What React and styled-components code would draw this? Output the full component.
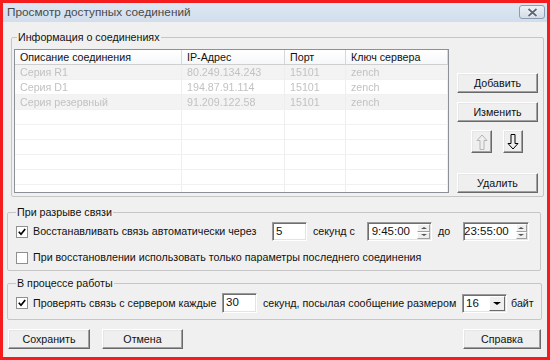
import React from "react";
import styled, { createGlobalStyle } from "styled-components";

const GlobalStyle = createGlobalStyle`
  html, body {
    margin: 0;
    padding: 0;
    background: #fff;
  }
  body {
    font-family: "Liberation Sans", Arial, sans-serif;
    font-size: 10.7px;
    color: #111;
  }
`;

const Window = styled.div`
  width: 550px;
  height: 360px;
  box-sizing: border-box;
  border: 3px solid #f41c1c;
  background: #f0f0f0;
  display: flex;
  flex-direction: column;
  overflow: hidden;
`;

const TitleBar = styled.div`
  height: 19px;
  display: flex;
  justify-content: space-between;
  padding: 0 2px 0 4px;
  background: linear-gradient(to bottom, #dde7f3, #d2deec);
`;

const Title = styled.div`
  font-size: 11.8px;
  line-height: 19px;
  color: #4a4a4a;
`;

const CloseBtn = styled.div`
  margin-top: 2px;
  width: 26px;
  height: 14px;
  box-sizing: border-box;
  border: 1px solid #8d9bb0;
  border-radius: 3px;
  background: linear-gradient(to bottom, #eef2f7, #d3dce8);
  display: flex;
  align-items: center;
  justify-content: center;
`;

const Group = styled.fieldset`
  margin: ${(p) => p.$m};
  padding: ${(p) => p.$p};
  border: 1px solid #c6c6c6;
  border-radius: 2px;
  min-width: 0;
`;

const Legend = styled.legend`
  padding: 0 1px;
  margin-left: ${(p) => p.$ml || 0}px;
  line-height: 13px;
`;

const InfoLayout = styled.div`
  display: flex;
`;

const Table = styled.div`
  width: 435px;
  height: 144px;
  box-sizing: border-box;
  border: 1px solid #8c9098;
  background: #fff;
  overflow: hidden;
`;

const cols = "167px 103px 61px 1fr";

const HeadRow = styled.div`
  display: grid;
  grid-template-columns: ${cols};
  height: 15px;
`;

const HeadCell = styled.div`
  padding-left: 5px;
  line-height: 14px;
  background: linear-gradient(to bottom, #fff, #f6f7f9);
  border-right: 1px solid #d8d8d8;
  border-bottom: 1px solid #cfcfcf;
  white-space: nowrap;
`;

const Row = styled.div`
  display: grid;
  grid-template-columns: ${cols};
  height: 15px;
  box-sizing: border-box;
  background: ${(p) => (p.$alt ? "#f3f3f3" : "#fff")};
  border-bottom: 1px solid #f1f1f1;
`;

const Cell = styled.div`
  padding-left: 5px;
  line-height: 14px;
  color: #c2c2c2;
  filter: blur(0.7px);
  border-right: 1px solid #eeeeee;
  white-space: nowrap;
`;

const SideButtons = styled.div`
  margin-left: 8px;
  padding-top: 24px;
  display: flex;
  flex-direction: column;
`;

const Btn = styled.button`
  width: ${(p) => p.$w || 81}px;
  height: ${(p) => p.$h || 20}px;
  margin: ${(p) => p.$m || 0};
  padding: 0;
  box-sizing: border-box;
  font-family: inherit;
  font-size: 10.7px;
  color: #111;
  background: #efefef;
  border: 1px solid;
  border-color: #fff #696969 #696969 #fff;
  box-shadow: inset -1px -1px #a0a0a0, inset 1px 1px #e6e6e6;
  display: flex;
  align-items: center;
  justify-content: center;
`;

const ArrowRow = styled.div`
  display: flex;
  gap: 11px;
  padding-left: 14px;
  margin: 8px 0 20px;
`;

const FormRow = styled.div`
  display: flex;
  align-items: center;
  height: ${(p) => p.$h}px;
  margin-top: ${(p) => p.$mt || 0}px;
  white-space: nowrap;
`;

const CheckBox = styled.span`
  width: 12px;
  height: 12px;
  box-sizing: border-box;
  border: 1px solid #8e8f8f;
  background: #fff;
  display: flex;
  align-items: center;
  justify-content: center;
  flex: none;
`;

const Text = styled.span`
  margin-left: ${(p) => p.$ml || 0}px;
  width: ${(p) => (p.$w ? `${p.$w}px` : "auto")};
  flex: none;
  line-height: 13px;
`;

const Sunken = styled.div`
  width: ${(p) => p.$w}px;
  height: ${(p) => p.$h || 19}px;
  box-sizing: border-box;
  border: 1px solid;
  border-color: #9a9a9a #fff #fff #9a9a9a;
  box-shadow: inset 1px 1px #6f6f6f, inset -1px -1px #e3e3e3;
  background: #fff;
  display: flex;
  align-items: stretch;
  flex: none;
`;

const FieldText = styled.div`
  flex: 1;
  padding: ${(p) => (p.$right ? "0 7px 0 0" : "0 0 0 3px")};
  text-align: ${(p) => (p.$right ? "right" : "left")};
  line-height: 16px;
  font-size: 11.5px;
`;

const SpinBox = styled.div`
  width: 13px;
  margin: 1px 1px 1px 0;
  display: flex;
  flex-direction: column;
`;

const SpinHalf = styled.div`
  flex: 1;
  background: #f0f0f0;
  border: 1px solid;
  border-color: #fff #a0a0a0 #a0a0a0 #fff;
  display: flex;
  align-items: center;
  justify-content: center;
`;

const Tri = styled.span`
  width: 0;
  height: 0;
  border-left: ${(p) => p.$s}px solid transparent;
  border-right: ${(p) => p.$s}px solid transparent;
  ${(p) => (p.$up ? "border-bottom" : "border-top")}: ${(p) => p.$s - 1}px solid
    ${(p) => p.$c || "#555"};
`;

const DropBtn = styled.div`
  width: 16px;
  margin: 1px 1px 1px 0;
  box-sizing: border-box;
  background: #efefef;
  border: 1px solid;
  border-color: #fff #696969 #696969 #fff;
  display: flex;
  align-items: center;
  justify-content: center;
`;

const Footer = styled.div`
  display: flex;
  margin-top: 9px;
  padding: 0 6px 0 5px;
`;

const rows = [
  ["Серия R1", "80.249.134.243", "15101", "zench"],
  ["Серия D1", "194.87.91.114", "15101", "zench"],
  ["Серия резервный", "91.209.122.58", "15101", "zench"],
];

const Check = () => (
  <svg width="8" height="8" viewBox="0 0 8 8">
    <polyline points="0.8,3.8 3,6.2 7.2,1" fill="none" stroke="#000" strokeWidth="1.7" />
  </svg>
);

const Arrow = ({ up, color }) => (
  <svg width="12" height="16" viewBox="0 0 12 16">
    <path
      d="M4 0.5 H8 V9.5 H11 L6 15 L1 9.5 H4 Z"
      transform={up ? "rotate(180 6 8)" : undefined}
      fill="none"
      stroke={color}
      strokeWidth="1"
    />
  </svg>
);

const Spinner = ({ w, value }) => (
  <Sunken $w={w}>
    <FieldText $right>{value}</FieldText>
    <SpinBox>
      <SpinHalf>
        <Tri $up $s={3} />
      </SpinHalf>
      <SpinHalf>
        <Tri $s={3} />
      </SpinHalf>
    </SpinBox>
  </Sunken>
);

export default function App() {
  const empty = Array.from({ length: 6 });
  return (
    <>
      <GlobalStyle />
      <Window>
        <TitleBar>
          <Title>Просмотр доступных соединений</Title>
          <CloseBtn>
            <svg width="11" height="9" viewBox="0 0 11 9">
              <path d="M1.5 1 L9.5 8 M9.5 1 L1.5 8" stroke="#fff" strokeWidth="3.4" />
              <path d="M1.5 1 L9.5 8 M9.5 1 L1.5 8" stroke="#5d6a7e" strokeWidth="2" />
            </svg>
          </CloseBtn>
        </TitleBar>

        <Group $m="9px 3px 0 8px" $p="5px 5px 3px 2px">
          <Legend $ml={3}>Информация о соединениях</Legend>
          <InfoLayout>
            <Table>
              <HeadRow>
                <HeadCell>Описание соединения</HeadCell>
                <HeadCell>IP-Адрес</HeadCell>
                <HeadCell>Порт</HeadCell>
                <HeadCell>Ключ сервера</HeadCell>
              </HeadRow>
              {rows.map((r, i) => (
                <Row key={i} $alt={i !== 1}>
                  {r.map((c, j) => (
                    <Cell key={j}>{c}</Cell>
                  ))}
                </Row>
              ))}
              {empty.map((_, i) => (
                <Row key={`e${i}`}>
                  <Cell />
                  <Cell />
                  <Cell />
                  <Cell />
                </Row>
              ))}
            </Table>
            <SideButtons>
              <Btn>Добавить</Btn>
              <Btn $m="9px 0 0">Изменить</Btn>
              <ArrowRow>
                <Btn $w={21} $h={23}>
                  <Arrow up color="#b4b4b4" />
                </Btn>
                <Btn $w={20} $h={23}>
                  <Arrow color="#000" />
                </Btn>
              </ArrowRow>
              <Btn>Удалить</Btn>
            </SideButtons>
          </InfoLayout>
        </Group>

        <Group $m="9px 6px 0 4px" $p="3px 8px 6px 8px">
          <Legend>При разрыве связи</Legend>
          <FormRow $h={19}>
            <CheckBox>
              <Check />
            </CheckBox>
            <Text $ml={5} $w={239}>
              Восстанавливать связь автоматически через
            </Text>
            <Sunken $w={35}>
              <FieldText>5</FieldText>
            </Sunken>
            <Text $ml={6} $w={54}>
              секунд с
            </Text>
            <Spinner w={65} value="9:45:00" />
            <Text $ml={6} $w={25}>
              до
            </Text>
            <Spinner w={66} value="23:55:00" />
          </FormRow>
          <FormRow $h={13} $mt={10}>
            <CheckBox />
            <Text $ml={5}>
              При восстановлении использовать только параметры последнего соединения
            </Text>
          </FormRow>
        </Group>

        <Group $m="6px 5px 0 4px" $p="3px 8px 6px 8px">
          <Legend>В процессе работы</Legend>
          <FormRow $h={20}>
            <CheckBox>
              <Check />
            </CheckBox>
            <Text $ml={5} $w={189}>
              Проверять связь с сервером каждые
            </Text>
            <Sunken $w={35} $h={20}>
              <FieldText>30</FieldText>
            </Sunken>
            <Text $ml={6} $w={199}>
              секунд, посылая сообщение размером
            </Text>
            <Sunken $w={45}>
              <FieldText>16</FieldText>
              <DropBtn>
                <Tri $s={4} $c="#000" />
              </DropBtn>
            </Sunken>
            <Text $ml={4}>байт</Text>
          </FormRow>
        </Group>

        <Footer>
          <Btn $w={82}>Сохранить</Btn>
          <Btn $w={81} $m="0 0 0 12px">
            Отмена
          </Btn>
          <Btn $w={78} $m="0 0 0 auto">
            Справка
          </Btn>
        </Footer>
      </Window>
    </>
  );
}
